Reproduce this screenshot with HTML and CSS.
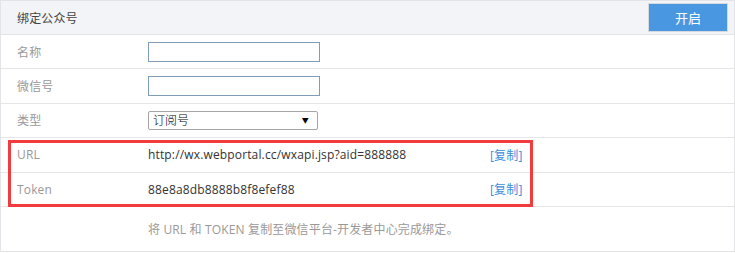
FILE: index.html
```html
<!DOCTYPE html>
<html lang="zh-cn">
<head>
  <meta charset="UTF-8" />
  <title>绑定公众号</title>
  <link rel="stylesheet" href="styles.css">
</head>
<body>

  <div class="panel">

    <div class="panel-header">
      <span class="panel-title">绑定公众号</span>
      <button class="btn-open">开启</button>
    </div>

    <div class="row">
      <div class="label">名称</div>
      <div class="field"><input type="text" class="text-input" /></div>
    </div>

    <div class="row">
      <div class="label">微信号</div>
      <div class="field"><input type="text" class="text-input" /></div>
    </div>

    <div class="row">
      <div class="label">类型</div>
      <div class="field">
        <span class="select-wrap">
          <select class="select">
            <option>订阅号</option>
            <option>服务号</option>
          </select>
        </span>
      </div>
    </div>

    <div class="highlight-group">
      <div class="row">
        <div class="label">URL</div>
        <div class="value">http://wx.webportal.cc/wxapi.jsp?aid=888888</div>
        <a href="#" class="copy">[复制]</a>
      </div>

      <div class="row">
        <div class="label">Token</div>
        <div class="value">88e8a8db8888b8f8efef88</div>
        <a href="#" class="copy">[复制]</a>
      </div>

      <div class="highlight"></div>
    </div>

    <div class="panel-footer">
      将 URL 和 TOKEN 复制至微信平台-开发者中心完成绑定。
    </div>

  </div>

</body>
</html>
```

FILE: styles.css
```css
* {
  margin: 0;
  padding: 0;
  box-sizing: border-box;
}

body {
  background: #fff;
  font-family: "Open Sans", "Noto Sans CJK SC", sans-serif;
  font-size: 12px;
  letter-spacing: 0.15px;
  color: #333;
}

.panel {
  width: 735px;
  border: 1px solid #e3e4e8;
  background: #fff;
}

.panel-header {
  height: 34px;
  background: #f3f4f8;
  border-bottom: 1px solid #e3e4e8;
  display: flex;
  align-items: center;
  justify-content: space-between;
  padding: 0 6px 0 16px;
}

.panel-title {
  color: #444;
}

.btn-open {
  width: 80px;
  height: 29px;
  background: #4a97e1;
  border: 1px solid #d6d9de;
  color: #fff;
  font-family: inherit;
  font-size: 13px;
  cursor: pointer;
}

.row {
  height: 34.4px;
  border-bottom: 1px solid #e6e6e9;
  display: flex;
  align-items: center;
  padding-left: 16px;
}

.label {
  width: 131px;
  color: #999;
}

.field {
  display: flex;
  align-items: center;
}

.text-input {
  width: 172px;
  height: 20px;
  border: 1px solid #7f9db9;
  outline: none;
  padding: 0 3px;
  font-family: inherit;
  font-size: 12px;
}

.select-wrap {
  position: relative;
  display: inline-block;
}

.select-wrap::after {
  content: "▼";
  position: absolute;
  right: 9px;
  top: 4px;
  font-size: 7px;
  color: #000;
  pointer-events: none;
}

.select {
  appearance: none;
  -webkit-appearance: none;
  width: 170px;
  height: 19px;
  border: 1px solid #a6a6a6;
  border-radius: 2px;
  background: #fff;
  padding: 0 4px;
  font-family: inherit;
  font-size: 12px;
  font-weight: 300;
  color: #000;
}

.value {
  width: 342px;
  color: #333;
}

.copy {
  color: #3b8ddb;
  text-decoration: none;
}

.highlight-group {
  position: relative;
}

.highlight {
  position: absolute;
  left: 7px;
  top: 2px;
  width: 525px;
  height: 67px;
  border: 3px solid #f23b3c;
  pointer-events: none;
}

.panel-footer {
  height: 44px;
  display: flex;
  align-items: center;
  padding-left: 147px;
  color: #999;
}
```
